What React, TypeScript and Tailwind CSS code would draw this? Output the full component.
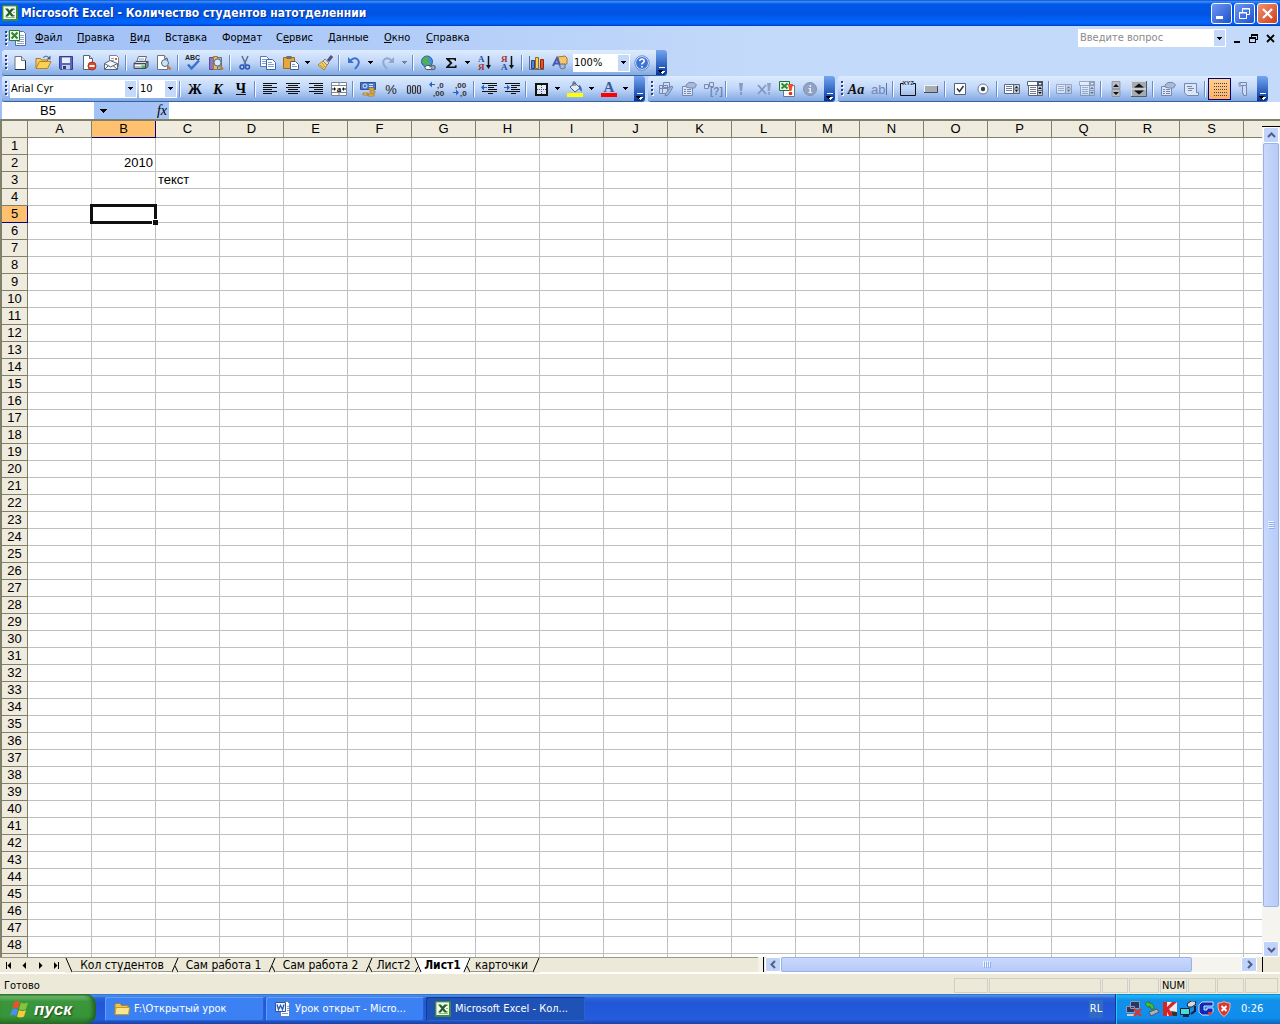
import React from 'react';

type Item = { icon: string; label: string; arrow?: boolean; off?: boolean; active?: boolean } | '|';

const serif = 'Liberation Serif, serif';
const sans = 'Liberation Sans, sans-serif';

const listIcon = (
  <>
    <path d="M.5 3.500h15v9H.5z" fill="#fff" stroke="#596780" />
    <path d="M2 5.500h6M2 7.500h6M2 9.500h6" stroke="#6f7f9b" />
    <path d="M10 4h5v8h-5z" fill="#c5cad3" />
    <path d="M11 7l1.500-2L14 7zM11 9l1.500 2L14 9z" fill="#111" />
    <path d="M9.500 4v8M10 8h5" stroke="#596780" />
  </>
);

const comboIcon = (
  <>
    <path d="M.5 .5h15v4H.5zM1.500 4.500h14v10h-14z" fill="#fff" stroke="#596780" />
    <path d="M10 0h6v5h-6z" fill="#46536b" />
    <path d="M11.500 2h3L13 4z" fill="#fff" />
    <path d="M3 6.500h6M3 8.500h6M3 10.500h6M3 12.500h6" stroke="#6f7f9b" />
    <path d="M11 5h4v9h-4z" fill="#c5cad3" />
    <path d="M11 8l2-2 2 2zM11 11l2 2 2-2z" fill="#111" />
    <path d="M10.500 5v9M11 9.500h4" stroke="#596780" />
  </>
);

const icons: Record<string, React.ReactNode> = {
  fresh: (
    <>
      <path d="M3 1.500h6.500l4 4v9H3z" fill="#fff" stroke="#6a7485" />
      <path d="M13.500 5.500v9H3" fill="none" stroke="#26324a" />
      <path d="M9.500 1.500v4h4" fill="#d6e0f0" stroke="#6a7485" />
    </>
  ),
  open: (
    <>
      <path d="M1 13.500V3.500h4.500l1 1.500h6v2" fill="#f6cf66" stroke="#a5782c" />
      <path d="M1 13.500l3.500-7H16l-3.500 7z" fill="#fbd151" stroke="#b58226" />
      <path d="M8 2.500q3-3 6 0" fill="none" stroke="#46607f" />
      <path d="M15.500 .5v4h-4z" fill="#46607f" />
    </>
  ),
  save: (
    <>
      <path d="M1.500 1.500h13v13h-12l-1-1z" fill="#5866c6" stroke="#343c8c" />
      <path d="M4 2h8v6H4z" fill="#e9eefb" />
      <path d="M4 2h8v1H4z" fill="#9eaee5" />
      <path d="M4 10h8v4.500H4z" fill="#c6cce0" />
      <path d="M5 11h3v3H5z" fill="#31397f" />
    </>
  ),
  permission: (
    <>
      <path d="M2.500 .5h6l3 3v11h-9z" fill="#fff" stroke="#566276" />
      <path d="M8.500 .5v3h3" fill="#d6e0f0" stroke="#566276" />
      <circle cx="11" cy="11" r="4" fill="#dd4a2a" stroke="#b4311b" />
      <path d="M8.500 10h5v2h-5z" fill="#fff" />
    </>
  ),
  mail: (
    <>
      <path d="M5.500 .5h7l2 2v9h-9z" fill="#fff" stroke="#77859c" />
      <path d="M7 3.500h3M7 5.500h3" stroke="#8ba0c4" />
      <path d="M11 3h2v2h-2z" fill="#e0612f" />
      <path d="M.5 8.500L6 5.500l7.500 3v6H.5z" fill="#f4f6fa" stroke="#5c6677" />
      <path d="M.5 8.500l6 3.500 7-3.500M.5 14.500l4-4M13.500 14.500l-4.500-4" fill="none" stroke="#5c6677" />
    </>
  ),
  print: (
    <>
      <path d="M5.500 1.500h8l-2 6H3.500z" fill="#fff" stroke="#5f6c80" />
      <path d="M6 4h5M5.500 6h5" stroke="#8ba0c4" />
      <path d="M1 8.500l2-2h12l-2 2z" fill="#d8dce2" stroke="#505b6a" />
      <path d="M1 8.500h11.500v5H1z" fill="#b8bfca" stroke="#3f4a5a" />
      <path d="M12.500 8.500l2.500-2v5l-2.500 2z" fill="#8a94a3" stroke="#3f4a5a" />
      <path d="M9 11h3v2H9z" fill="#22ce30" />
      <path d="M2 10.500h6" stroke="#fff" />
    </>
  ),
  preview: (
    <>
      <path d="M1.500 .5h7l3 3v11h-10z" fill="#fff" stroke="#6a7688" />
      <path d="M8.500 .5v3h3" fill="#d6e0f0" stroke="#6a7688" />
      <circle cx="9" cy="8" r="3.500" fill="#c9e3f5" stroke="#53698a" />
      <path d="M11.500 11l3 3.500" stroke="#c9782a" strokeWidth="2.200" />
    </>
  ),
  spell: (
    <>
      <text x="0" y="5" fontSize="7" fontWeight="700" fontFamily={sans} fill="#222">ABC</text>
      <path d="M3 9.500l3.500 4L14 5.500" fill="none" stroke="#3a70cd" strokeWidth="2.500" />
    </>
  ),
  research: (
    <>
      <path d="M1.500 2.500h4v12h-4z" fill="#8d77ca" stroke="#5c4b95" />
      <path d="M5.500 1.500h4v13h-4z" fill="#e9bd56" stroke="#9d7930" />
      <path d="M9.500 2.500h4v12h-4z" fill="#9ea9bc" stroke="#67738a" />
      <circle cx="9.500" cy="7.500" r="3.500" fill="#d8ecf8" stroke="#53698a" />
      <path d="M12 10.500l3 4" stroke="#c9782a" strokeWidth="2" />
    </>
  ),
  cut: (
    <>
      <path d="M5 1l4 9M11 1L7 10" stroke="#5e6f8f" strokeWidth="1.500" />
      <circle cx="5" cy="12" r="2" fill="none" stroke="#2856b8" strokeWidth="1.500" />
      <circle cx="10.500" cy="12" r="2" fill="none" stroke="#2856b8" strokeWidth="1.500" />
    </>
  ),
  copy: (
    <>
      <path d="M.5 1.500h6l3 3v7h-9z" fill="#fff" stroke="#5877b8" />
      <path d="M2 4.500h4M2 6.500h4M2 8.500h4" stroke="#7fa0dc" />
      <path d="M6.500 4.500h6l3 3v7h-9z" fill="#fff" stroke="#3d62ae" />
      <path d="M8 7.500h4M8 9.500h6M8 11.500h6" stroke="#7fa0dc" />
    </>
  ),
  paste: (
    <>
      <path d="M.5 2.500h11v11H.5z" fill="#e6a83a" stroke="#a06a1e" />
      <path d="M3.500 1h5v3h-5z" fill="#67707e" />
      <path d="M7.500 6.500h5l3 3v5h-8z" fill="#fff" stroke="#4a5e86" />
      <path d="M9 9.500h3M9 11.500h5" stroke="#7f9acb" />
    </>
  ),
  brush: (
    <>
      <path d="M15 1l-4 5" stroke="#5a4d80" strokeWidth="3" />
      <path d="M8 4l4 4-2 2-4-4z" fill="#d8dce2" stroke="#7b8290" />
      <path d="M6 6l4 4-3 5-6-5z" fill="#f5d56c" stroke="#a58631" />
      <path d="M3 10l4 3M5 8l3 4" stroke="#b9963d" />
    </>
  ),
  undo: (
    <>
      <path d="M2 2v6h6z" fill="#3f70cf" />
      <path d="M4 6q4-4 7-2t1 6l-3 4" fill="none" stroke="#3f70cf" strokeWidth="2" />
    </>
  ),
  redo: (
    <>
      <path d="M14 2v6H8z" fill="#93a7cc" />
      <path d="M12 6Q8 2 5 4t-1 6l3 4" fill="none" stroke="#93a7cc" strokeWidth="2" />
    </>
  ),
  globe: (
    <>
      <circle cx="7" cy="6.500" r="5.500" fill="#4590dc" stroke="#2d5f9c" />
      <path d="M3 3q4-3 6 0l-2 3 3 2-2 4-3-3-3-2z" fill="#4fb34a" />
      <path d="M5 12.500q0-2 2-2h3q2 0 2 2t-2 2H7q-2 0-2-2z" fill="#fff" stroke="#47566b" />
      <path d="M10 12.500q0-2 2-2h1q2 0 2 2t-2 2h-2" fill="none" stroke="#626f80" strokeWidth="1.500" />
    </>
  ),
  sigma: <path d="M3 3h10v3h-1q0-1.500-1.500-1.500H6.500L9.500 8 6 11.500h5q1.500 0 1.500-1.500h1v3H3v-1l4-4-4-4z" fill="#111" />,
  sortUp: (
    <>
      <text x="1" y="7" fontSize="9" fontWeight="700" fontFamily={serif} fill="#2f4f9e">А</text>
      <text x="1" y="15" fontSize="9" fontWeight="700" fontFamily={serif} fill="#9e3434">Я</text>
      <path d="M11.500 1v11" stroke="#111" strokeWidth="1.500" />
      <path d="M9 10h5l-2.500 4z" fill="#111" />
    </>
  ),
  sortDown: (
    <>
      <text x="1" y="7" fontSize="9" fontWeight="700" fontFamily={serif} fill="#9e3434">Я</text>
      <text x="1" y="15" fontSize="9" fontWeight="700" fontFamily={serif} fill="#2f4f9e">А</text>
      <path d="M11.500 1v11" stroke="#111" strokeWidth="1.500" />
      <path d="M9 10h5l-2.500 4z" fill="#111" />
    </>
  ),
  chart: (
    <>
      <path d="M.5 1v13.500H15" fill="none" stroke="#5a6b88" />
      <path d="M2.500 5.500h3v8h-3z" fill="#4f83e2" stroke="#23458c" />
      <path d="M6.500 2.500h3v11h-3z" fill="#fccf4a" stroke="#9b6713" />
      <path d="M11.500 4.500h3v9h-3z" fill="#e4502e" stroke="#8e2a14" />
    </>
  ),
  drawing: (
    <>
      <path d="M6 2l7-1 2 2v6l-7 1z" fill="#f3c669" stroke="#a1773a" />
      <path d="M1 11L5 3l3 8M2.500 8.500h4" fill="none" stroke="#4b58b0" strokeWidth="2" />
      <path d="M8 9h5v4q-2.500 2-5 0z" fill="#a9b6d2" stroke="#65728f" />
    </>
  ),
  help: (
    <>
      <circle cx="8" cy="8" r="6.500" fill="#3c74dc" stroke="#fff" />
      <circle cx="8" cy="8" r="7.200" fill="none" stroke="#4d72b8" strokeWidth=".8" />
      <path d="M5.700 6q.3-2 2.300-2t2.300 1.800Q10.300 7 9 7.700T8 9.500M8 11v1.500" fill="none" stroke="#fff" strokeWidth="1.600" />
    </>
  ),
  bold: <text x="8" y="13" textAnchor="middle" fontSize="14" fontWeight="700" fontFamily={serif}>Ж</text>,
  italic: <text x="8" y="13" textAnchor="middle" fontSize="14" fontWeight="700" fontStyle="italic" fontFamily={serif}>К</text>,
  under: (
    <>
      <text x="8" y="12" textAnchor="middle" fontSize="14" fontWeight="700" fontFamily={serif}>Ч</text>
      <path d="M3 13.500h10" stroke="#111" />
    </>
  ),
  left: <path d="M1 2.500h14M1 4.500h9M1 6.500h14M1 8.500h9M1 10.500h14M1 12.500h9" stroke="#111" />,
  center: <path d="M1 2.500h14M3 4.500h10M1 6.500h14M3 8.500h10M1 10.500h14M3 12.500h10" stroke="#111" />,
  right: <path d="M1 2.500h14M6 4.500h9M1 6.500h14M6 8.500h9M1 10.500h14M6 12.500h9" stroke="#111" />,
  merge: (
    <>
      <path d="M.5 1.500h15v13H.5z" fill="#fff" stroke="#7b8594" />
      <path d="M.5 4.500h15M.5 11.500h15M8 1.500v3M8 11.500v3" stroke="#7b8594" />
      <path d="M1 8h3M15 8h-3" stroke="#111" />
      <path d="M5 8L3 6v4zM11 8l2-2v4z" fill="#111" />
      <text x="8" y="10.500" textAnchor="middle" fontSize="9" fontWeight="700" fontFamily={serif}>a</text>
    </>
  ),
  currency: (
    <>
      <path d="M.5 1.500h15v7H.5z" fill="#4776c8" stroke="#2e508f" />
      <circle cx="5" cy="5" r="2" fill="none" stroke="#d6e4fa" />
      <path d="M9 3.500h4M9 5.500h4" stroke="#d6e4fa" />
      <path d="M9 7h5v2H9zM10 10h5v2h-5zM8 13h6v2H8zM3 12h5v2H3z" fill="#f4c244" stroke="#a36f15" strokeWidth=".7" />
    </>
  ),
  percent: <text x="8" y="13" textAnchor="middle" fontSize="13" fontFamily={sans} fill="#222">%</text>,
  thousands: (
    <g fill="none" stroke="#333" strokeWidth="1.200">
      <rect x="1.500" y="4.500" width="3" height="8" rx="1.500" />
      <rect x="6.500" y="4.500" width="3" height="8" rx="1.500" />
      <rect x="11.500" y="4.500" width="3" height="8" rx="1.500" />
    </g>
  ),
  incDec: (
    <>
      <path d="M6 3.500H2" stroke="#2a62c8" />
      <path d="M0 3.500l3-3v6z" fill="#2a62c8" />
      <text x="8" y="7" fontSize="8" fontWeight="700" fontFamily={sans} fill="#333">,0</text>
      <text x="4" y="15" fontSize="8" fontWeight="700" fontFamily={sans} fill="#333">,00</text>
    </>
  ),
  decDec: (
    <>
      <text x="3" y="7" fontSize="8" fontWeight="700" fontFamily={sans} fill="#333">,00</text>
      <path d="M1 11.500h4" stroke="#2a62c8" />
      <path d="M7 11.500l-3-3v6z" fill="#2a62c8" />
      <text x="8" y="15" fontSize="8" fontWeight="700" fontFamily={sans} fill="#333">,0</text>
    </>
  ),
  outdent: (
    <>
      <path d="M1 2.500h15M7 4.500h9M7 6.500h6M7 8.500h9M1 10.500h15M7 12.500h5" stroke="#111" />
      <path d="M0 6.500l3-3v6z" fill="#2a62c8" />
      <path d="M2 6.500h4" stroke="#2a62c8" />
    </>
  ),
  indent: (
    <>
      <path d="M1 2.500h15M7 4.500h9M7 6.500h6M7 8.500h9M1 10.500h15M7 12.500h5" stroke="#111" />
      <path d="M6 6.500l-3-3v6z" fill="#2a62c8" />
      <path d="M0 6.500h4" stroke="#2a62c8" />
    </>
  ),
  borders: (
    <>
      <path d="M3 3h11v11H3z" fill="#fff" fillOpacity=".5" stroke="#111" strokeWidth="2" />
      <path d="M8.500 4v9M4 8.500h9" stroke="#555" strokeDasharray="1 1" />
    </>
  ),
  fill: (
    <>
      <path d="M3 6l5-4 5 5-5 4z" fill="#e8edf5" stroke="#4b5d7c" />
      <path d="M6 5V1h2v4" fill="none" stroke="#4b5d7c" />
      <path d="M12 4q3 1 3 7l-3-3z" fill="#3568bd" />
      <path d="M0 12h16v4H0z" fill="#ff0" />
    </>
  ),
  fontColor: (
    <>
      <text x="8" y="11" textAnchor="middle" fontSize="15" fontWeight="700" fontFamily={serif} fill="#3a5b9c">A</text>
      <path d="M0 12h16v4H0z" fill="#f00" />
    </>
  ),
  paper: (
    <>
      <path d="M1.500 4.500h8v8h-8zM5.500 1.500h6v5h-6z" fill="#cfdcf3" stroke="#7488b2" />
      <path d="M2 7.500h8M4.500 5v7" stroke="#7488b2" />
      <path d="M15 6l-5 8-3 1 1-3 5-7z" fill="#a5b7da" stroke="#6f84b0" />
    </>
  ),
  props: (
    <>
      <path d="M1.500 5.500h10v9h-10z" fill="#dbe5f6" stroke="#7488b2" />
      <path d="M3 8.500h2M6 8.500h4M3 10.500h2M6 10.500h4M3 12.500h2M6 12.500h4" stroke="#7488b2" />
      <path d="M5 4l3-2.500h5L15.500 4l-2 3H9L5 6z" fill="#a9badb" stroke="#7488b2" />
    </>
  ),
  query: (
    <>
      <path d="M.5 3.500h4v4h-4zM5.500 1.500h4v4h-4z" fill="#cfdcf3" stroke="#7488b2" />
      <text x="6" y="14" fontSize="10" fontFamily={sans} fontWeight="700" fill="#6f83ad">[?]</text>
    </>
  ),
  bang: <path d="M6 2h4L9 10H7zM7 11h2v3H7z" fill="#8599c4" />,
  xbang: (
    <>
      <path d="M2 4l8 9M10 4l-8 9" stroke="#7f94be" strokeWidth="1.500" />
      <path d="M11 2h4l-1 8h-2zM12 11h2v3h-2z" fill="#8ea2ca" />
    </>
  ),
  refresh: (
    <>
      <path d="M4.500 4.500h11v11h-11z" fill="#fff" stroke="#66788f" />
      <path d="M.5 .5h10v9H.5z" fill="#e8f4e3" stroke="#217332" />
      <path d="M2.500 2.500l6 5M8.500 2.500l-6 5" stroke="#288c39" strokeWidth="2" />
      <path d="M9 3h5l-1.500 7h-2z" fill="#f14d22" />
      <circle cx="11.500" cy="12.500" r="1.800" fill="#e02f12" />
    </>
  ),
  info: (
    <>
      <circle cx="8" cy="8" r="6.500" fill="#91a2c4" stroke="#8091b5" />
      <path d="M6.500 7H9v4h1v1H6.500v-1h1V8h-1zM7.500 4H9v2H7.500z" fill="#e3ebf8" />
    </>
  ),
  aa: <text x="8" y="13" textAnchor="middle" fontSize="14" fontWeight="700" fontStyle="italic" fontFamily={serif} fill="#111">Aa</text>,
  ab: (
    <>
      <text x="0" y="13" fontSize="13" fontFamily={sans} fill="#7286b0">ab</text>
      <path d="M15.500 2v12" stroke="#61739a" />
    </>
  ),
  frame: (
    <>
      <path d="M3 2.500H.5v12h15v-12H13" fill="none" stroke="#111" />
      <text x="8" y="4" textAnchor="middle" fontSize="6" fontWeight="700" fontFamily={sans} fill="#234">XYZ</text>
    </>
  ),
  button: (
    <>
      <path d="M2 5h12v6H2z" fill="#a8adb4" />
      <path d="M1.500 11V4.500H14" fill="none" stroke="#f1f3f6" />
      <path d="M1 11.500h13.500V5" fill="none" stroke="#454b56" />
    </>
  ),
  check: (
    <>
      <path d="M2.500 2.500h11v11h-11z" fill="#fff" stroke="#52627e" />
      <path d="M5 7.500l2.500 3L11.500 5" fill="none" stroke="#334" strokeWidth="1.500" />
    </>
  ),
  radio: (
    <>
      <circle cx="8" cy="8" r="5" fill="#fff" stroke="#6b7892" />
      <circle cx="8" cy="8" r="2.200" fill="#35405a" />
    </>
  ),
  list: listIcon,
  combo: comboIcon,
  listOff: <g opacity=".45">{listIcon}</g>,
  comboOff: <g opacity=".45">{comboIcon}</g>,
  spinner: (
    <>
      <path d="M4 .5h8v7H4zM4 8.500h8v7H4z" fill="#b9bec6" stroke="#747c88" strokeWidth=".6" />
      <path d="M5 6l3-3 3 3zM5 11h6l-3 3z" fill="#111" />
    </>
  ),
  scroller: (
    <>
      <path d="M.5 .5h15v15H.5z" fill="#a5abb3" stroke="#d7dbe0" />
      <path d="M15.500 0v15.500H0" fill="none" stroke="#555b66" />
      <path d="M3 6.500l5-4 5 4zM3 9.500h10l-5 4z" fill="#111" />
      <path d="M1 8h14" stroke="#eee" />
    </>
  ),
  code: (
    <>
      <path d="M1.500 2.500h12v9h2v3H4l-2.500-3z" fill="#dbe5f6" stroke="#7488b2" />
      <path d="M4 5.500h5M5 7.500h6M5 9.500h4" stroke="#7488b2" />
    </>
  ),
  dots: <path d="M2 2.500h13M2 5.500h13M2 8.500h13M2 11.500h13M2 14.500h13" stroke="#36425e" strokeDasharray="1 1" />,
  scroll: (
    <>
      <path d="M4.500 1.500h7v3h-7zM7.500 4.500h4v10h-3v-2h-1z" fill="#cfdcf3" stroke="#7488b2" />
      <path d="M3 2h3v4H4z" fill="#98abd0" />
    </>
  ),
};

const Icon = ({ name }: { name: string }) => (
  <svg width="16" height="16" viewBox="0 0 16 16" className="shrink-0 overflow-visible" aria-hidden="true">
    {icons[name]}
  </svg>
);

const Down = () => (
  <svg width="5" height="3" viewBox="0 0 5 3" shapeRendering="crispEdges" aria-hidden="true">
    <path d="M0 0h5v1H0zM1 1h3v1H1zM2 2h1v1H2z" />
  </svg>
);

const ExcelIcon = () => (
  <svg width="16" height="16" viewBox="0 0 16 16" className="shrink-0" aria-hidden="true">
    <rect width="16" height="16" rx="1" fill="#3f8a3c" />
    <path d="M1.500 14V1.500H14" fill="none" stroke="#a9d19b" />
    <path d="M2 2h12v12H2z" fill="#f3f8ee" />
    <path d="M11 4.500h2M11 7.500h2M11 10.500h2M4 12.500h9" stroke="#8fbd80" />
    <path d="M3 3.500h3l1.500 2 2-2h3L9 7.500l3.500 4h-3l-2-2.200L6 11.500H3l3.300-4z" fill="#245f2c" />
  </svg>
);

const BookIcon = () => (
  <svg width="18" height="17" viewBox="0 0 18 17" className="shrink-0" aria-hidden="true">
    <path d="M6.500 1.500h8l2 2v12h-10z" fill="#fff" stroke="#58709c" />
    <path d="M11 5.500h4M11 7.500h4M11 9.500h4M8 11.500h7M8 13.500h7" stroke="#8ba5cf" />
    <path d="M.5 .5h10v10H.5z" fill="#edf6e6" stroke="#2d7a31" />
    <path d="M2.500 2.500l6 6M8.500 2.500l-6 6" stroke="#2f8435" strokeWidth="2" />
  </svg>
);

const Grip = () => (
  <svg width="6" height="17" viewBox="0 0 6 17" shapeRendering="crispEdges" className="shrink-0" aria-hidden="true">
    <path d="M4 2h2v2H4zM4 6h2v2H4zM4 10h2v2H4zM4 14h2v2H4z" fill="#fff" />
    <path d="M3 1h2v2H3zM3 5h2v2H3zM3 9h2v2H3zM3 13h2v2H3z" fill="#27418e" />
  </svg>
);

const Tools = ({ items }: { items: Item[] }) => (
  <>
    {items.map((item, index) =>
      item === '|' ? (
        <span key={index} className="mx-[2px] h-4 w-[2px] shrink-0 border-l border-[#6a8ccb] bg-[#f1f9ff]" />
      ) : (
        <React.Fragment key={index}>
          <button
            aria-label={item.label}
            disabled={item.off}
            className={
              item.active
                ? 'flex h-[22px] w-[23px] shrink-0 items-center justify-center border border-[#000080] bg-gradient-to-b from-[#ffd091] to-[#feb05f]'
                : 'flex h-[22px] w-[23px] shrink-0 items-center justify-center'
            }
          >
            <Icon name={item.icon} />
          </button>
          {item.arrow && (
            <button
              aria-label={item.label + ' options'}
              className={
                item.off
                  ? 'flex h-[22px] w-[11px] shrink-0 items-center justify-center opacity-40'
                  : 'flex h-[22px] w-[11px] shrink-0 items-center justify-center'
              }
            >
              <Down />
            </button>
          )}
        </React.Fragment>
      )
    )}
  </>
);

const Bar = ({ children, label }: { children: React.ReactNode; label: string }) => (
  <div
    role="toolbar"
    aria-label={label}
    className="flex h-[25px] items-stretch rounded-[3px] bg-gradient-to-b from-[#ddecfe] via-[#c0d6f8] to-[#81a9e2] shadow-[0_1px_0_#3b619c]"
  >
    <div className="flex items-center">
      <Grip />
      {children}
    </div>
    <button
      aria-label="Toolbar options"
      className="ml-[3px] flex w-[11px] items-end justify-center rounded-r-[3px] bg-gradient-to-b from-[#75a6f1] to-[#00359c] pb-px"
    >
      <svg width="7" height="7" viewBox="0 0 7 7" shapeRendering="crispEdges" aria-hidden="true">
        <path d="M1 0h6v1H1zM2 4h5v1H6v1H5v1H4V6H3V5H2z" fill="#fff" />
        <path d="M0 3h5v1H4v1H3v1H2V5H1V4H0z" />
      </svg>
    </button>
  </div>
);

const Combo = ({ label, value, box }: { label: string; value: string; box: string }) => (
  <div className={box}>
    <select aria-label={label} className="h-full min-w-0 flex-1 appearance-none bg-white px-px text-[11px] leading-none outline-none">
      <option>{value}</option>
    </select>
    <span className="pointer-events-none my-px mr-px flex w-[11px] items-center justify-center bg-[#c4d9f9]">
      <Down />
    </span>
  </div>
);

const standard: Item[] = [
  { icon: 'fresh', label: 'Создать' },
  { icon: 'open', label: 'Открыть' },
  { icon: 'save', label: 'Сохранить' },
  { icon: 'permission', label: 'Разрешения' },
  { icon: 'mail', label: 'Сообщение' },
  '|',
  { icon: 'print', label: 'Печать' },
  { icon: 'preview', label: 'Просмотр' },
  '|',
  { icon: 'spell', label: 'Орфография' },
  { icon: 'research', label: 'Справочники' },
  '|',
  { icon: 'cut', label: 'Вырезать' },
  { icon: 'copy', label: 'Копировать' },
  { icon: 'paste', label: 'Вставить', arrow: true },
  { icon: 'brush', label: 'Формат по образцу' },
  '|',
  { icon: 'undo', label: 'Отменить', arrow: true },
  { icon: 'redo', label: 'Вернуть', arrow: true, off: true },
  '|',
  { icon: 'globe', label: 'Гиперссылка' },
  { icon: 'sigma', label: 'Автосумма', arrow: true },
  { icon: 'sortUp', label: 'По возрастанию' },
  { icon: 'sortDown', label: 'По убыванию' },
  '|',
  { icon: 'chart', label: 'Диаграмма' },
  { icon: 'drawing', label: 'Рисование' },
];

const formatting: Item[] = [
  '|',
  { icon: 'bold', label: 'Полужирный' },
  { icon: 'italic', label: 'Курсив' },
  { icon: 'under', label: 'Подчеркнутый' },
  '|',
  { icon: 'left', label: 'По левому краю' },
  { icon: 'center', label: 'По центру' },
  { icon: 'right', label: 'По правому краю' },
  { icon: 'merge', label: 'Объединить' },
  '|',
  { icon: 'currency', label: 'Денежный формат' },
  { icon: 'percent', label: 'Процентный формат' },
  { icon: 'thousands', label: 'Разделители' },
  { icon: 'incDec', label: 'Увеличить разрядность' },
  { icon: 'decDec', label: 'Уменьшить разрядность' },
  '|',
  { icon: 'outdent', label: 'Уменьшить отступ' },
  { icon: 'indent', label: 'Увеличить отступ' },
  '|',
  { icon: 'borders', label: 'Границы', arrow: true },
  { icon: 'fill', label: 'Цвет заливки', arrow: true },
  { icon: 'fontColor', label: 'Цвет шрифта', arrow: true },
];

const external: Item[] = [
  { icon: 'paper', label: 'Изменить запрос', off: true },
  { icon: 'props', label: 'Свойства диапазона', off: true },
  { icon: 'query', label: 'Параметры запроса', off: true },
  '|',
  { icon: 'bang', label: 'Обновить данные', off: true },
  { icon: 'xbang', label: 'Отменить обновление', off: true },
  { icon: 'refresh', label: 'Обновить все' },
  { icon: 'info', label: 'Состояние', off: true },
];

const forms: Item[] = [
  { icon: 'aa', label: 'Надпись' },
  { icon: 'ab', label: 'Поле', off: true },
  '|',
  { icon: 'frame', label: 'Группа' },
  { icon: 'button', label: 'Кнопка' },
  '|',
  { icon: 'check', label: 'Флажок' },
  { icon: 'radio', label: 'Переключатель' },
  '|',
  { icon: 'list', label: 'Список' },
  { icon: 'combo', label: 'Поле со списком' },
  '|',
  { icon: 'listOff', label: 'Список с полем', off: true },
  { icon: 'comboOff', label: 'Поле с раскрывающимся списком', off: true },
  '|',
  { icon: 'spinner', label: 'Счетчик' },
  { icon: 'scroller', label: 'Полоса прокрутки' },
  '|',
  { icon: 'props', label: 'Свойства', off: true },
  { icon: 'code', label: 'Текст программы', off: true },
  '|',
  { icon: 'dots', label: 'Сетка', active: true },
  { icon: 'scroll', label: 'Просмотр окна', off: true },
];

// [before, underlined letter, after, width]
const menu = [
  ['', 'Ф', 'айл', 'w-[42px]'],
  ['', 'П', 'равка', 'w-[53px]'],
  ['', 'В', 'ид', 'w-[35px]'],
  ['Вст', 'а', 'вка', 'w-[57px]'],
  ['Фор', 'м', 'ат', 'w-[54px]'],
  ['С', 'е', 'рвис', 'w-[52px]'],
  ['', 'Д', 'анные', 'w-[56px]'],
  ['', 'О', 'кно', 'w-[42px]'],
  ['', 'С', 'правка', 'w-[59px]'],
];

const columns = 'ABCDEFGHIJKLMNOPQRST'.split('');
const rows = Array.from({ length: 49 }, (_, i) => i + 1);
const cells: Record<string, string> = { B2: '2010', C3: 'текст' };

const TitleBar = () => (
  <header className="flex h-[26px] shrink-0 items-center bg-[linear-gradient(180deg,#0a4fd0_0,#3c8cf8_6%,#0058e8_16%,#0054e3_55%,#0066ff_85%,#0060f5_92%,#003bc0_100%)] pl-[2px] pr-[2px]">
    <ExcelIcon />
    <h1 className="ml-[3px] flex-1 truncate text-[12px] font-bold text-white [text-shadow:1px_1px_#0a2f8c]">
      Microsoft Excel - Количество студентов натотделеннии
    </h1>
    <div className="flex gap-[2px]">
      <button aria-label="Свернуть" className="h-[21px] w-[21px] rounded-[3px] border border-white bg-gradient-to-br from-[#6f97f0] to-[#1c4fd0]">
        <svg width="19" height="19" viewBox="0 0 19 19" aria-hidden="true"><path d="M4 12h7v3H4z" fill="#fff" /></svg>
      </button>
      <button aria-label="Восстановить" className="h-[21px] w-[21px] rounded-[3px] border border-white bg-gradient-to-br from-[#6f97f0] to-[#1c4fd0]">
        <svg width="19" height="19" viewBox="0 0 19 19" aria-hidden="true">
          <path d="M7.500 8V4.500h7v6H12M7 5h8M4.500 8.500h7v6h-7zM4 9h8" fill="none" stroke="#fff" />
        </svg>
      </button>
      <button aria-label="Закрыть" className="h-[21px] w-[21px] rounded-[3px] border border-white bg-gradient-to-br from-[#f0906f] to-[#cc3a14]">
        <svg width="19" height="19" viewBox="0 0 19 19" aria-hidden="true"><path d="M5 5l9 9M14 5l-9 9" stroke="#fff" strokeWidth="2.200" /></svg>
      </button>
    </div>
  </header>
);

const MenuBar = () => (
  <div className="flex h-6 items-center pl-[2px]">
    <Grip />
    <div className="ml-px w-[19px]"><BookIcon /></div>
    <nav className="flex flex-1 pl-[7px]">
      {menu.map(([before, key, after, width], index) => (
        <button key={index} className={width + ' whitespace-nowrap text-left'}>
          {before}<span className="underline underline-offset-1">{key}</span>{after}
        </button>
      ))}
    </nav>
    <div className="flex h-[18px] w-[148px] bg-white">
      <input aria-label="Введите вопрос" placeholder="Введите вопрос" className="min-w-0 flex-1 px-[2px] outline-none placeholder:text-[#8a8a8a]" />
      <button aria-label="Список вопросов" className="my-px mr-px flex w-[11px] items-center justify-center bg-[#c4d9f9]"><Down /></button>
    </div>
    <button aria-label="Свернуть книгу" className="ml-[2px] flex w-[17px] justify-center">
      <svg width="9" height="9" viewBox="0 0 9 9" aria-hidden="true"><path d="M2 7h6v2H2z" /></svg>
    </button>
    <button aria-label="Восстановить книгу" className="flex w-4 justify-center">
      <svg width="9" height="9" viewBox="0 0 9 9" shapeRendering="crispEdges" aria-hidden="true">
        <path d="M2 0h7v6H7V5h1V2H3v1H2zM0 3h7v6H0zm1 2v3h5V5z" fillRule="evenodd" />
      </svg>
    </button>
    <button aria-label="Закрыть книгу" className="flex w-[19px] justify-center">
      <svg width="9" height="9" viewBox="0 0 9 9" aria-hidden="true"><path d="M1 1l7 7M8 1L1 8" stroke="#000" strokeWidth="1.800" /></svg>
    </button>
  </div>
);

const FormulaBar = () => (
  <div className="flex h-[17px] pl-[2px]">
    <input aria-label="Имя" defaultValue="B5" className="w-[92px] bg-white text-center font-['Liberation_Sans',sans-serif] text-[13px] leading-none outline-none" />
    <button aria-label="Список имен" className="flex w-[18px] items-center justify-center">
      <svg width="7" height="4" viewBox="0 0 7 4" shapeRendering="crispEdges" aria-hidden="true"><path d="M0 0h7v1H0zM1 1h5v1H1zM2 2h3v1H2zM3 3h1v1H3z" /></svg>
    </button>
    <button aria-label="Вставка функции" className="w-[57px] pr-[2px] text-right font-['Liberation_Serif',serif] text-[14px] italic leading-none">
      fx
    </button>
    <input aria-label="Строка формул" className="min-w-0 flex-1 bg-white outline-none" />
  </div>
);

const cellClass = (name: string) =>
  name === 'B5'
    ? 'relative h-[17px] border-b border-r border-[#c0c0c0] p-0'
    : name === 'B2'
      ? 'h-[17px] border-b border-r border-[#c0c0c0] p-0 pr-[2px] text-right'
      : 'h-[17px] border-b border-r border-[#c0c0c0] p-0 pl-[2px] text-left';

const Grid = () => (
  <table className="w-0 table-fixed border-separate border-spacing-0 bg-white font-['Liberation_Sans',sans-serif] text-[13px] leading-4">
    <colgroup>
      <col className="w-[26px]" />
      {columns.map((column) => <col key={column} className="w-16" />)}
    </colgroup>
    <thead>
      <tr>
        <th aria-label="Выделить все" className="h-[17px] border-b border-r border-[#808069] bg-[#efebde] p-0" />
        {columns.map((column) => (
          <th
            key={column}
            className={
              column === 'B'
                ? 'h-[17px] border-b border-r border-[#000080] bg-[#ffc06f] p-0 font-normal'
                : 'h-[17px] border-b border-r border-[#808069] bg-[#efebde] p-0 font-normal'
            }
          >
            {column !== 'T' && column}
          </th>
        ))}
      </tr>
    </thead>
    <tbody>
      {rows.map((row) => (
        <tr key={row}>
          <th
            className={
              row === 5
                ? 'h-[17px] border-b border-r border-[#000080] bg-[#ffc06f] p-0 font-normal'
                : 'h-[17px] border-b border-r border-[#808069] bg-[#efebde] p-0 font-normal'
            }
          >
            {row < 49 && row}
          </th>
          {columns.map((column) => (
            <td key={column} className={cellClass(column + row)}>
              {cells[column + row]}
              {column + row === 'B5' && (
                <>
                  <span className="absolute -inset-[2px] border-[3px] border-[#101010]" />
                  <span className="absolute -bottom-[3px] -right-[3px] h-[6px] w-[6px] border-l border-t border-white bg-[#101010]" />
                </>
              )}
            </td>
          ))}
        </tr>
      ))}
    </tbody>
  </table>
);

const Chevron = ({ d }: { d: string }) => (
  <svg width="9" height="9" viewBox="0 0 9 9" aria-hidden="true">
    <path d={d} fill="none" stroke="#4d6185" strokeWidth="2" />
  </svg>
);

const VerticalScroll = () => (
  <div className="flex w-[18px] shrink-0 flex-col bg-[#f5f4ef]">
    <div className="h-[6px] shrink-0 border-b border-black bg-[#ece9d8]" />
    <button aria-label="Вверх" className="mx-px flex h-4 shrink-0 items-center justify-center rounded-[2px] border border-white bg-[#c1d3fb]">
      <Chevron d="M1 6l3.500-3.500L8 6" />
    </button>
    <div className="mx-px flex flex-1 flex-col">
      <div className="flex flex-[766] items-center justify-center rounded-[2px] border border-[#98b2ea] bg-gradient-to-r from-[#c9d8fc] to-[#b7cbf8]">
        <svg width="7" height="8" viewBox="0 0 7 8" shapeRendering="crispEdges" aria-hidden="true">
          <path d="M0 0h6v1H0zM0 2h6v1H0zM0 4h6v1H0zM0 6h6v1H0z" fill="#eef4fe" />
          <path d="M1 1h6v1H1zM1 3h6v1H1zM1 5h6v1H1zM1 7h6v1H1z" fill="#8cb0f8" />
        </svg>
      </div>
      <div className="flex-[34]" />
    </div>
    <button aria-label="Вниз" className="mx-px flex h-4 shrink-0 items-center justify-center rounded-[2px] border border-white bg-[#c1d3fb]">
      <Chevron d="M1 3l3.500 3.500L8 3" />
    </button>
  </div>
);

const tabs = [
  { name: 'Кол студентов', width: 'w-[98px]' },
  { name: 'Сам работа 1', width: 'w-[89px]' },
  { name: 'Сам работа 2', width: 'w-[89px]' },
  { name: 'Лист2', width: 'w-[41px]' },
  { name: 'Лист1', width: 'w-[41px]' },
  { name: 'карточки', width: 'w-[61px]' },
];

// Slanted divider after a tab: most lean right, the one before the open sheet leans left
const Slant = ({ kind }: { kind: 'first' | 'right' | 'open' | 'close' | 'last' }) => (
  <svg width="8" height="15" viewBox="0 0 8 15" className="shrink-0 bg-[#ece9d8]" aria-hidden="true">
    {kind === 'open' && <path d="M0 0h8v15H7z" fill="#fff" />}
    {kind === 'close' && <path d="M0 0h8L2 14H0z" fill="#fff" />}
    {(kind === 'first' || kind === 'open') && <path d="M1 0l6 14" stroke="#000" />}
    {kind === 'open' && <path d="M4 9l-3 5" stroke="#000" />}
    {kind !== 'first' && kind !== 'open' && <path d="M7 0L1 14" stroke="#000" />}
    {(kind === 'right' || kind === 'close') && <path d="M4 8l3 6" stroke="#000" />}
  </svg>
);

const kinds = ['right', 'right', 'right', 'open', 'close', 'last'] as const;

const SheetTabs = () => (
  <div className="flex h-[17px] shrink-0 border-b-2 border-white bg-[#ece9d8]">
    <div className="flex min-w-0 flex-1 border-t border-[#9a9888]">
      <div className="flex w-[65px] items-center">
        {[
          ['Первый лист', 'M1 0h1v7H1zM6 0v7L2.500 3.500z'],
          ['Предыдущий лист', 'M5 0v7L1.500 3.500z'],
          ['Следующий лист', 'M2 0v7l3.500-3.500z'],
          ['Последний лист', 'M1 0v7l3.500-3.500zM5 0h1v7H5z'],
        ].map(([label, d]) => (
          <button key={label} aria-label={label} className="flex w-4 justify-center">
            <svg width="7" height="7" viewBox="0 0 7 7" aria-hidden="true"><path d={d} /></svg>
          </button>
        ))}
      </div>
      <Slant kind="first" />
      {tabs.map((tab, index) => (
        <React.Fragment key={tab.name}>
          <button
            className={
              (tab.name === 'Лист1' ? 'bg-white font-bold ' : 'border-b border-[#9a9888] ') +
              tab.width +
              ' flex shrink-0 items-center justify-center whitespace-nowrap text-[12px] leading-none'
            }
          >
            {tab.name}
          </button>
          <Slant kind={kinds[index]} />
        </React.Fragment>
      ))}
    </div>
    <div className="flex w-[522px] shrink-0">
      <span className="mr-px w-[6px] border-r border-black bg-[#f4f2e8]" />
      <button aria-label="Влево" className="flex w-4 items-center justify-center rounded-[2px] border border-white bg-[#c1d3fb]">
        <Chevron d="M6 1L2.500 4.500 6 8" />
      </button>
      <div className="flex flex-1 bg-[#f5f4ef]">
        <div className="flex flex-[411] items-center justify-center rounded-[2px] border border-[#98b2ea] bg-gradient-to-b from-[#c9d8fc] to-[#b7cbf8]">
          <svg width="8" height="7" viewBox="0 0 8 7" shapeRendering="crispEdges" aria-hidden="true">
            <path d="M0 0h1v6H0zM2 0h1v6H2zM4 0h1v6H4zM6 0h1v6H6z" fill="#eef4fe" />
            <path d="M1 1h1v6H1zM3 1h1v6H3zM5 1h1v6H5zM7 1h1v6H7z" fill="#8cb0f8" />
          </svg>
        </div>
        <div className="flex-[49]" />
      </div>
      <button aria-label="Вправо" className="flex w-4 items-center justify-center rounded-[2px] border border-white bg-[#c1d3fb]">
        <Chevron d="M3 1l3.500 3.500L3 8" />
      </button>
      <span className="mr-[17px] w-[6px] border-r border-black bg-[#ece9d8]" />
    </div>
  </div>
);

const StatusBar = () => (
  <footer className="flex h-5 shrink-0 items-center bg-[#ece9d8] pl-1 pr-[2px] pt-[3px]">
    <span className="flex-1">Готово</span>
    <div className="flex h-[15px] gap-px">
      {['w-[34px]', 'w-[112px]', 'w-[26px]', 'w-[30px]', 'w-[27px]', 'w-[28px]', 'w-[27px]', 'w-[33px]'].map((width, index) => (
        <span key={index} className={width + ' flex items-center justify-center border border-[#d0d0c8] leading-none'}>
          {index === 4 && 'NUM'}
        </span>
      ))}
    </div>
  </footer>
);

const Taskbar = () => (
  <div className="flex h-[30px] shrink-0 items-stretch bg-[linear-gradient(180deg,#3168d5_0,#4993e6_6%,#2a62d8_14%,#2157d7_30%,#245ddb_85%,#1941a5_100%)] text-white">
    <button className="flex w-24 items-center gap-1 rounded-r-[10px] bg-[linear-gradient(180deg,#2f7d2f_0,#6cb86c_8%,#3c963c_25%,#379437_75%,#2a702a_100%)] pl-[10px] font-['Liberation_Sans',sans-serif] text-[17px] font-bold italic leading-none shadow-[inset_-3px_0_4px_#1f5f23] [text-shadow:1px_1px_2px_#163f16]">
      <svg width="20" height="18" viewBox="0 0 20 18" aria-hidden="true">
        <path d="M4 2q3-2 6 0L8 8.500q-3-2-6 0z" fill="#e8542a" />
        <path d="M11 2.500q3 2 7 0L16 9q-4 2-7 0z" fill="#86c440" />
        <path d="M2 9.500q3-2 6 0L6 16q-3-2-6 0z" fill="#4c8df0" />
        <path d="M9 10q3 2 7 0l-2 6.500q-4 2-7 0z" fill="#f8cb3a" />
      </svg>
      пуск
    </button>
    <div className="ml-[9px] flex flex-1 items-center gap-[2px]">
      <button className="flex h-6 w-[159px] items-center gap-1 rounded-[2px] bg-[#3c81f3] pl-[9px] shadow-[inset_1px_1px_#629df8,inset_-1px_-1px_#2862d2]">
        <svg width="16" height="16" viewBox="0 0 16 16" aria-hidden="true">
          <path d="M1 13.500v-10l1-1h4l1.500 2H14v9z" fill="#f0c74c" stroke="#b1861f" />
          <path d="M1 13.500l1-7h13.500l-1 7z" fill="#fce58b" stroke="#c49a2e" />
        </svg>
        F:\Открытый урок
      </button>
      <button className="flex h-6 w-[158px] items-center gap-1 rounded-[2px] bg-[#3c81f3] pl-[9px] shadow-[inset_1px_1px_#629df8,inset_-1px_-1px_#2862d2]">
        <svg width="16" height="16" viewBox="0 0 16 16" aria-hidden="true">
          <path d="M5.500 .5h7l2 2v13h-9z" fill="#fff" stroke="#5c7cb8" />
          <path d="M12 5.500h2M12 7.500h2M12 9.500h2M7 12.500h6" stroke="#7e9cd4" />
          <path d="M.5 1.500h10v9H.5z" fill="#eef4ff" stroke="#2a54a8" />
          <path d="M2 3.500l1.500 5 2-4 2 4L9 3.500" fill="none" stroke="#2a54a8" strokeWidth="1.300" />
        </svg>
        Урок открыт - Micro...
      </button>
      <button className="flex h-6 w-[159px] items-center gap-1 rounded-[2px] bg-[#1e52b7] pl-[9px] shadow-[inset_1px_1px_#153c8c,inset_-1px_-1px_#2a63cc]">
        <ExcelIcon />
        Microsoft Excel - Кол...
      </button>
    </div>
    <button aria-label="Язык RL" className="my-[6px] mr-3 w-[14px] bg-[#316ac5] text-center text-[11px]">RL</button>
    <div className="flex w-[165px] items-center bg-[linear-gradient(180deg,#0f7bd8_0,#19b9f3_6%,#1290e8_20%,#0f8dee_80%,#0f62b8_100%)] pl-[11px] shadow-[inset_1px_0_#0b3b8e,inset_2px_0_#2fc4f8]">
      <div className="flex gap-[2px]">
        <svg width="16" height="16" viewBox="0 0 16 16" aria-hidden="true">
          <path d="M4.500 .5h9v7h-9zM.5 5.500h8v6h-8z" fill="#2a3560" stroke="#8f98b8" />
          <path d="M1 13h8v2H1z" fill="#c7cede" />
          <path d="M8 8l7 7M15 8l-7 7" stroke="#e0321f" strokeWidth="2.200" />
        </svg>
        <svg width="16" height="16" viewBox="0 0 16 16" aria-hidden="true">
          <path d="M5 11l8-3 2 3-8 4z" fill="#aab0b8" stroke="#4d5560" />
          <path d="M1 3l4-3v2q5 0 5 6H7q0-3-2-3v2z" fill="#48bd3a" stroke="#237a1d" strokeWidth=".8" />
        </svg>
        <svg width="16" height="16" viewBox="0 0 16 16" aria-hidden="true">
          <path d="M1 1h14v14H1z" fill="#e9edf0" />
          <path d="M1 1h4v5l5-5h5L7 8l5 7H7L5 11v4H1z" fill="#d92424" />
          <path d="M9 10l6 1v4h-4z" fill="#333" />
        </svg>
        <svg width="16" height="16" viewBox="0 0 16 16" aria-hidden="true">
          <path d="M.5 7.500h9v6h-9z" fill="#45dede" stroke="#123" />
          <path d="M3 15h6" stroke="#111" strokeWidth="1.500" />
          <path d="M7 3l4-3h4l1 3-4 3H8z" fill="#d5d8dc" stroke="#222" />
          <path d="M15 5v5l-4 3" fill="none" stroke="#1a1a3c" strokeWidth="2" />
        </svg>
        <svg width="16" height="16" viewBox="0 0 16 16" aria-hidden="true">
          <path d="M1 4l3-3h11v4H6v4h3V7h6v4l-4 3H4l-3-3z" fill="#1626b4" stroke="#fff" strokeWidth=".8" />
          <path d="M10 11h5l-4 4z" fill="#e33" />
        </svg>
        <svg width="16" height="16" viewBox="0 0 16 16" aria-hidden="true">
          <path d="M8 .5q3 2 6 1.500 1 9-6 13.500Q1 11 2 2q3 .5 6-1.500z" fill="#d9362c" stroke="#f0b6ae" />
          <path d="M5.500 5l5 5M10.500 5l-5 5" stroke="#fff" strokeWidth="2" />
        </svg>
      </div>
      <time className="ml-[9px]">0:26</time>
    </div>
  </div>
);

const App = () => (
  <div className="flex h-screen flex-col overflow-hidden font-['DejaVu_Sans_Condensed','DejaVu_Sans',sans-serif] text-[11px] leading-[14px] text-black">
    <TitleBar />
    <div className="shrink-0 bg-gradient-to-r from-[#9ebef5] to-[#c4dafa] to-60%">
      <MenuBar />
      <div className="flex h-[26px] pl-[2px]">
        <Bar label="Стандартная">
          <Tools items={standard} />
          <Combo label="Масштаб" value="100%" box="ml-[2px] flex h-[18px] w-[57px] bg-white" />
          <Tools items={[{ icon: 'help', label: 'Справка' }]} />
        </Bar>
      </div>
      <div className="flex h-[26px] gap-[3px] pl-[2px]">
        <Bar label="Форматирование">
          <Combo label="Шрифт" value="Arial Cyr" box="ml-[2px] mr-[2px] flex h-[18px] w-[127px] bg-white" />
          <Combo label="Размер" value="10" box="flex h-[18px] w-[38px] bg-white" />
          <Tools items={formatting} />
        </Bar>
        <Bar label="Внешние данные">
          <Tools items={external} />
        </Bar>
        <Bar label="Формы">
          <Tools items={forms} />
        </Bar>
      </div>
      <FormulaBar />
    </div>
    <main className="flex min-h-0 flex-1 border-l border-t-2 border-[#808069]">
      <div className="min-w-0 flex-1 overflow-hidden border-l border-[#808069]">
        <Grid />
      </div>
      <VerticalScroll />
    </main>
    <SheetTabs />
    <StatusBar />
    <Taskbar />
  </div>
);

export default App;
